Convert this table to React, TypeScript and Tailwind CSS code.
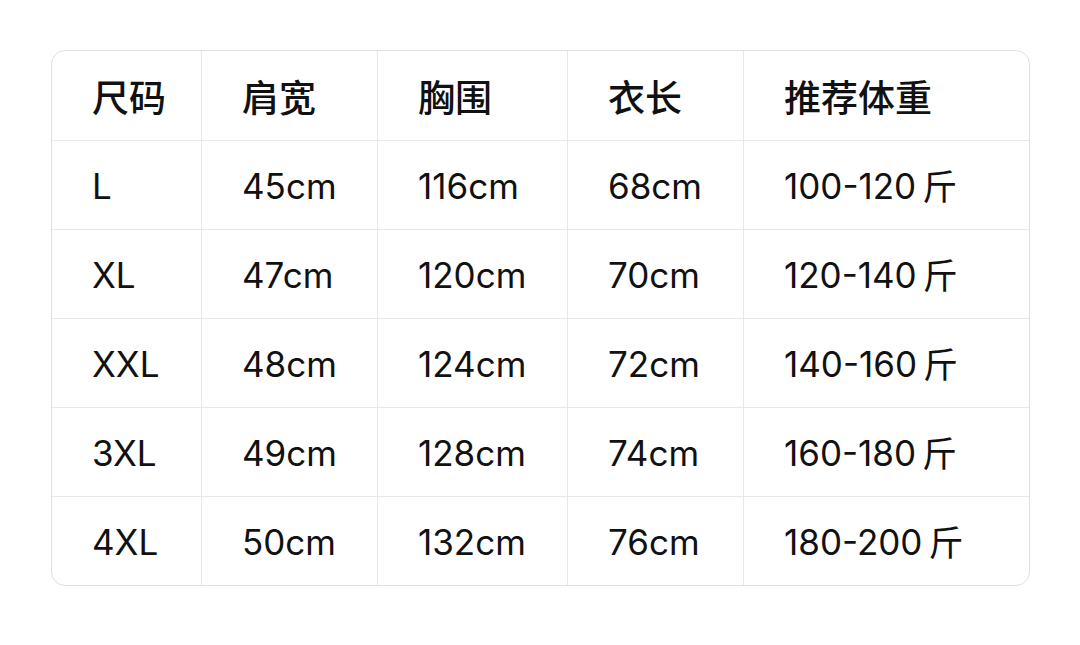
import React from "react";

const headers = ["尺码", "肩宽", "胸围", "衣长", "推荐体重"];
const rows = [
  ["L", "45cm", "116cm", "68cm", "100-120"],
  ["XL", "47cm", "120cm", "70cm", "120-140"],
  ["XXL", "48cm", "124cm", "72cm", "140-160"],
  ["3XL", "49cm", "128cm", "74cm", "160-180"],
  ["4XL", "50cm", "132cm", "76cm", "180-200"],
];
const widths = ["w-[150px]", "w-[176px]", "w-[190px]", "w-[176px]", "flex-1"];

export default function App() {
  return (
    <div className="w-[1080px] h-[645px] bg-white pt-[50px] pl-[51px]">
      <div
        className="w-[979px] rounded-[14px] border border-[#e0e0e0] overflow-hidden text-[#111]"
        style={{ fontFamily: 'Inter, "Noto Sans CJK SC", sans-serif' }}
      >
        <div className="flex h-[89px]">
          {headers.map((h, i) => (
            <div
              key={i}
              className={`${widths[i]} flex items-center pl-10 pt-[3px] text-[37px] ${i < 4 ? "border-r border-[#e8e8e8]" : ""}`}
              style={{ fontFamily: '"Noto Sans CJK SC", sans-serif', fontWeight: 500 }}
            >
              {h}
            </div>
          ))}
        </div>
        {rows.map((r, ri) => (
          <div key={ri} className="flex h-[89px] border-t border-[#e8e8e8]">
            {r.map((c, i) => (
              <div
                key={i}
                className={`${widths[i]} flex items-center pl-10 pt-[3px] text-[35px] ${i < 4 ? "border-r border-[#e8e8e8]" : ""}`}
              >
                <span>{c}</span>
                {i === 4 && (
                  <span className="ml-[6px] -mt-[3px]" style={{ fontFamily: '"Noto Sans CJK SC", sans-serif' }}>
                    斤
                  </span>
                )}
              </div>
            ))}
          </div>
        ))}
      </div>
    </div>
  );
}
